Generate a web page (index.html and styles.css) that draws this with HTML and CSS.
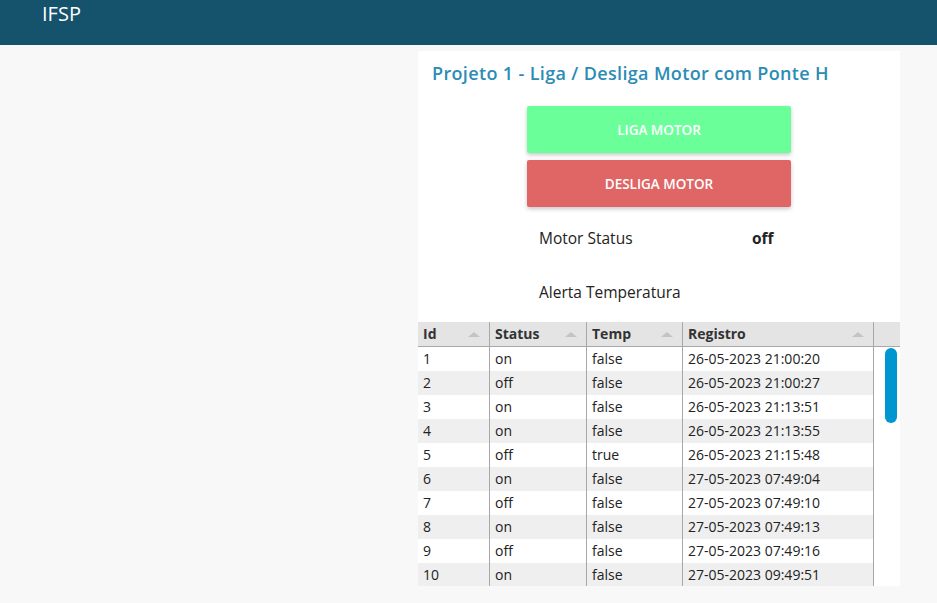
FILE: index.html
```html
<!DOCTYPE html>
<html lang="pt">
<head>
<meta charset="utf-8">
<title>IFSP</title>
<link rel="stylesheet" href="styles.css">
</head>
<body>
<header class="topbar"><span class="brand">IFSP</span></header>
<main class="layout">
  <div class="spacer"></div>
  <section class="card">
    <h1 class="title">Projeto 1 - Liga / Desliga Motor com Ponte H</h1>
    <div class="actions">
      <button class="btn btn-on">LIGA MOTOR</button>
      <button class="btn btn-off">DESLIGA MOTOR</button>
    </div>
    <div class="status">
      <div class="status-row"><span class="label">Motor Status</span><span class="value">off</span></div>
      <div class="status-row"><span class="label">Alerta Temperatura</span><span class="value"></span></div>
    </div>
    <div class="grid">
      <div class="grid-head">
        <div class="hcell">Id<span class="sort"></span></div>
        <div class="hcell">Status<span class="sort"></span></div>
        <div class="hcell">Temp<span class="sort"></span></div>
        <div class="hcell">Registro<span class="sort"></span></div>
        <div class="hcell hcell-end"></div>
      </div>
      <div class="grid-body">
        <div class="rows">
          <div class="row"><div class="cell">1</div><div class="cell">on</div><div class="cell">false</div><div class="cell">26-05-2023 21:00:20</div></div>
          <div class="row alt"><div class="cell">2</div><div class="cell">off</div><div class="cell">false</div><div class="cell">26-05-2023 21:00:27</div></div>
          <div class="row"><div class="cell">3</div><div class="cell">on</div><div class="cell">false</div><div class="cell">26-05-2023 21:13:51</div></div>
          <div class="row alt"><div class="cell">4</div><div class="cell">on</div><div class="cell">false</div><div class="cell">26-05-2023 21:13:55</div></div>
          <div class="row"><div class="cell">5</div><div class="cell">off</div><div class="cell">true</div><div class="cell">26-05-2023 21:15:48</div></div>
          <div class="row alt"><div class="cell">6</div><div class="cell">on</div><div class="cell">false</div><div class="cell">27-05-2023 07:49:04</div></div>
          <div class="row"><div class="cell">7</div><div class="cell">off</div><div class="cell">false</div><div class="cell">27-05-2023 07:49:10</div></div>
          <div class="row alt"><div class="cell">8</div><div class="cell">on</div><div class="cell">false</div><div class="cell">27-05-2023 07:49:13</div></div>
          <div class="row"><div class="cell">9</div><div class="cell">off</div><div class="cell">false</div><div class="cell">27-05-2023 07:49:16</div></div>
          <div class="row alt"><div class="cell">10</div><div class="cell">on</div><div class="cell">false</div><div class="cell">27-05-2023 09:49:51</div></div>
        </div>
        <div class="track"><div class="thumb"></div></div>
      </div>
    </div>
  </section>
</main>
</body>
</html>
```
FILE: styles.css
```css
* { box-sizing: border-box; }
html, body { margin: 0; padding: 0; }
body {
  background: #f8f8f8;
  font-family: "Open Sans", "Liberation Sans", sans-serif;
  color: #222;
  height: 603px;
  overflow: hidden;
}
.topbar {
  height: 45px;
  background: #15526b;
  padding: 2px 0 0 42px;
}
.brand {
  color: #fff;
  font-size: 20px;
  line-height: 24px;
}
.layout {
  display: flex;
  padding-top: 6px;
}
.spacer { width: 418px; flex: none; }
.card {
  width: 482px;
  background: #fff;
  padding-top: 10px;
}
.title {
  margin: 0 0 0 14px;
  font-size: 18px;
  font-weight: 600;
  color: #2b8cb6;
  line-height: 24px;
  letter-spacing: 0.35px;
  white-space: nowrap;
}
.actions {
  display: flex;
  flex-direction: column;
  align-items: center;
  gap: 7px;
  margin-top: 21px;
}
.btn {
  width: 264px;
  height: 47px;
  border: none;
  border-radius: 2px;
  color: #fff;
  font-family: inherit;
  font-size: 13.5px;
  font-weight: 600;
  box-shadow: 0 2px 4px rgba(0,0,0,0.22);
}
.btn-on { background: #6bff9a; }
.btn-off { background: #e06666; }
.status {
  margin: 19px 0 0 121px;
  display: flex;
  flex-direction: column;
  gap: 30px;
}
.status-row {
  display: flex;
  height: 24px;
  align-items: center;
  font-size: 15.5px;
}
.label { width: 213px; }
.value { font-weight: 700; }
.grid {
  margin-top: 18px;
  font-size: 14px;
}
.grid-head {
  display: grid;
  grid-template-columns: 72px 97px 96px 191px 25px;
  background: #e4e4e4;
  height: 25px;
  border-bottom: 1px solid #a8a8a8;
}
.hcell {
  position: relative;
  font-weight: 700;
  color: #333;
  padding: 0 0 0 5px;
  line-height: 24px;
  border-right: 1px solid #a8a8a8;
}
.hcell-end { border-right: none; }
.sort {
  position: absolute;
  right: 9px;
  top: 10px;
  width: 0;
  height: 0;
  border-left: 6px solid transparent;
  border-right: 6px solid transparent;
  border-bottom: 5px solid #c4c4c4;
}
.grid-body {
  display: flex;
  height: 239px;
  overflow: hidden;
}
.rows { width: 456px; flex: none; }
.row {
  display: grid;
  grid-template-columns: 72px 97px 96px 191px;
  height: 24px;
}
.row.alt { background: #efefef; }
.cell {
  padding-left: 5px;
  line-height: 24px;
  color: #222;
  border-right: 1px solid #a8a8a8;
}
.track {
  width: 25px;
  position: relative;
}
.thumb {
  position: absolute;
  left: 11px;
  top: 1px;
  width: 12px;
  height: 75px;
  border-radius: 6px;
  background: #0096d2;
}
```
